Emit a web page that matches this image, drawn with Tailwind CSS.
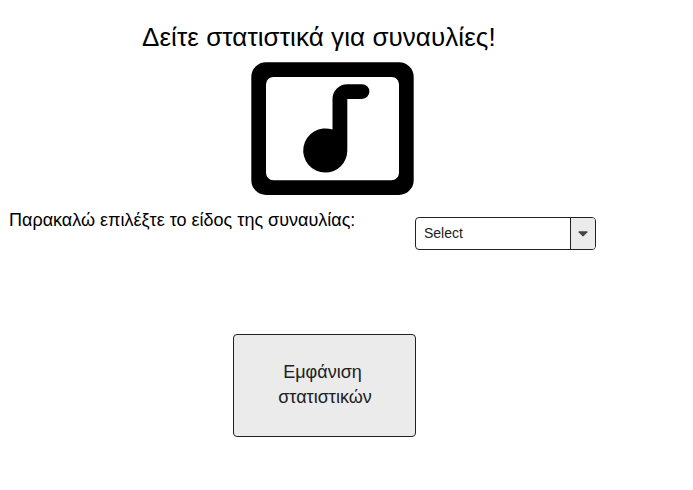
<!DOCTYPE html>
<html lang="el">
<head>
<meta charset="utf-8">
<title>Στατιστικά</title>
<script src="https://cdn.jsdelivr.net/npm/@tailwindcss/browser@4"></script>
</head>
<body class="bg-white text-black font-['Nimbus_Sans','Liberation_Sans',sans-serif]">
<main class="w-[693px] h-[490px] overflow-hidden flex flex-col">
  <h1 class="mt-[21px] ml-[142px] h-8 text-[26px] leading-8 tracking-[0.07px] whitespace-nowrap">Δείτε στατιστικά για συναυλίες!</h1>
  <svg class="mt-[9px] ml-[251px] shrink-0" width="163" height="133" viewBox="251 62 163 133">
    <path fill-rule="evenodd" d="M266 62.2H399a14.7 14.7 0 0 1 14.7 14.7V180.2a14.7 14.7 0 0 1-14.7 14.7H266a14.7 14.7 0 0 1-14.7-14.7V76.9a14.7 14.7 0 0 1 14.7-14.7ZM273.4 76.9a7.400 7.400 0 0 0-7.400 7.400V172.800a7.400 7.400 0 0 0 7.400 7.400H391.600a7.400 7.400 0 0 0 7.400-7.400V84.300a7.400 7.400 0 0 0-7.400-7.400Z"/>
    <path d="M325.200 172.600a22.100 22.100 0 1 1 7.300-43V99a14.800 14.800 0 0 1 14.800-14.800H362a7.400 7.400 0 0 1 0 14.800H347.300V150.500a22.100 22.100 0 0 1-22.100 22.100Z"/>
  </svg>
  <div class="mt-[13px] ml-[9px] flex">
    <p class="w-[406px] text-[18px] leading-6 whitespace-nowrap">Παρακαλώ επιλέξτε το είδος της συναυλίας:</p>
    <div class="mt-[9px] w-[181px] h-[33px] flex rounded-[4px] border border-[#212121] overflow-hidden text-[#212121]">
      <span class="flex-1 pl-2 text-[14px] leading-[31px]">Select</span>
      <span class="w-[25px] flex items-center justify-center border-l border-[#212121] bg-[#ebebeb]">
        <svg class="-ml-px" width="10" height="6" viewBox="0 0 10 6"><path fill="#444" d="M1 .3H9Q9.900.500 9.400 1.300L5.700 5.100Q5 5.700 4.300 5.100L.6 1.300Q.1.500 1 .3Z"/></svg>
      </span>
    </div>
  </div>
  <button class="mt-[84px] ml-[233px] w-[183px] h-[103px] pb-[2px] shrink-0 rounded-[4px] border border-[#212121] bg-[#ebebeb] text-[#212121] text-[18px] leading-[25px] text-center"><span class="block pr-1">Εμφάνιση</span><span class="block pl-px">στατιστικών</span></button>
</main>
</body>
</html>
